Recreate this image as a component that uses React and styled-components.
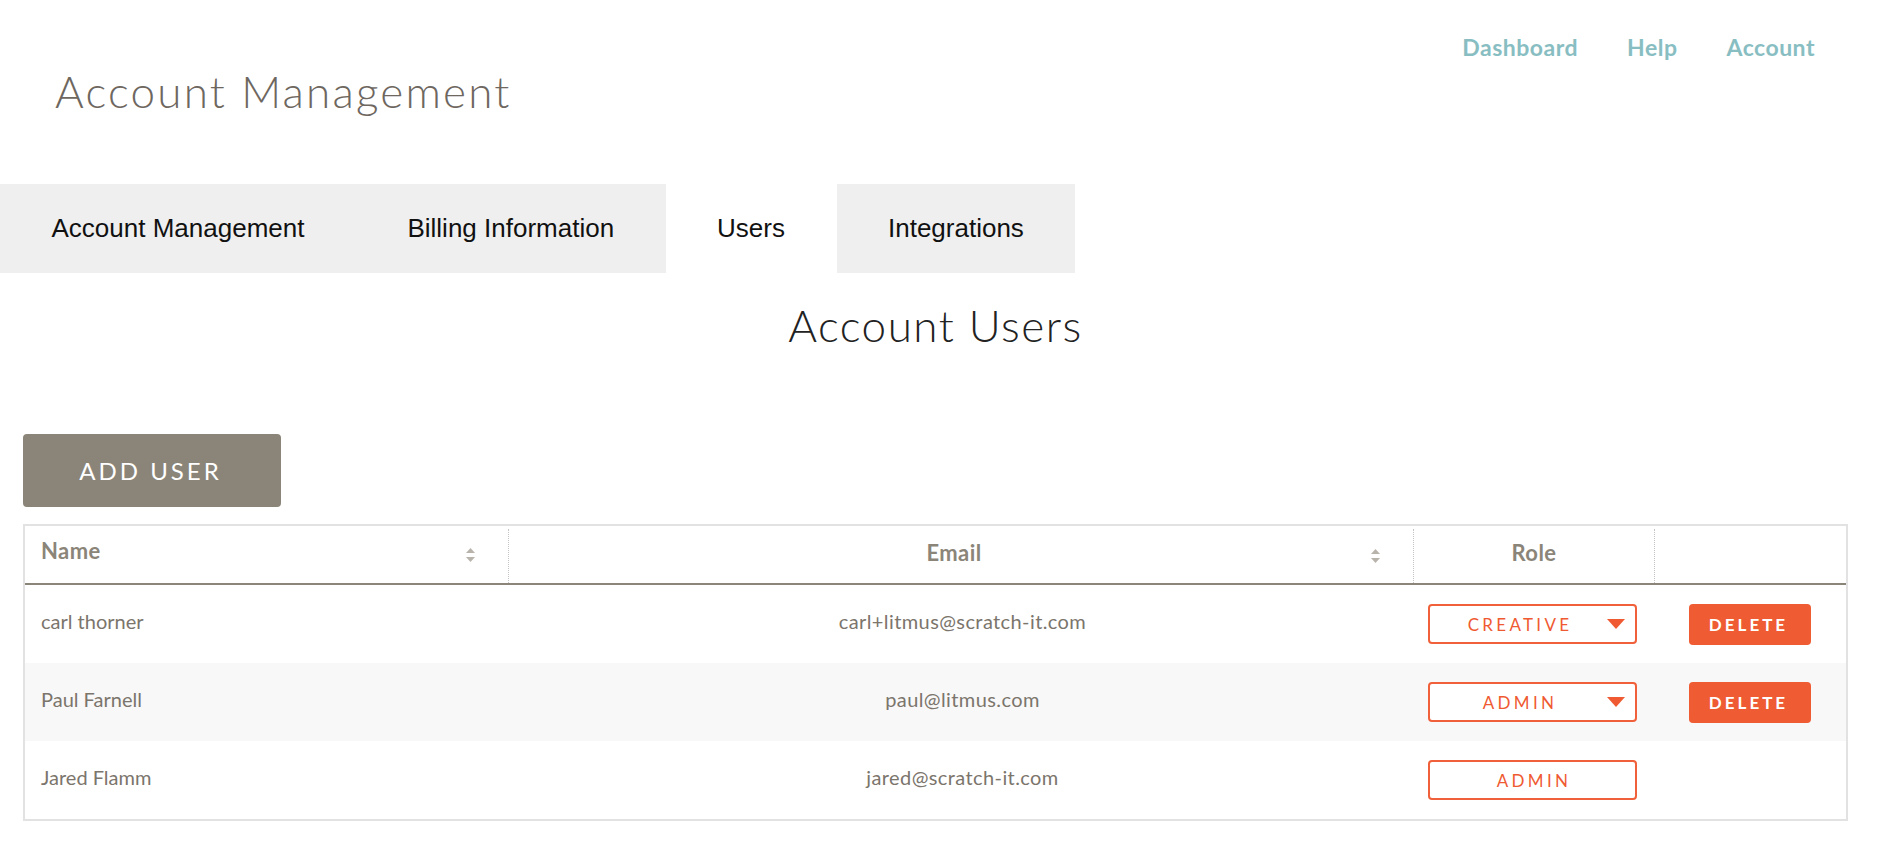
import React from "react";
import styled, { createGlobalStyle, css } from "styled-components";

const Global = createGlobalStyle`
  html, body { margin: 0; padding: 0; background: #fff; }
  body { font-family: Lato, "Liberation Sans", Arial, sans-serif; }
  * { box-sizing: border-box; }
`;

const Page = styled.div`
  width: 1880px;
  min-height: 848px;
  background: #fff;
`;

const TopBar = styled.header`
  display: flex;
  justify-content: space-between;
  align-items: flex-start;
  padding: 0 65px 0 55px;
`;

const PageTitle = styled.h1`
  margin: 0;
  padding-top: 66px;
  font-family: Lato, sans-serif;
  font-weight: 300;
  font-size: 44px;
  line-height: 50px;
  letter-spacing: 2.2px;
  color: #6e675f;
`;

const Nav = styled.nav`
  display: flex;
  gap: 49px;
  padding-top: 34px;
`;

const NavLink = styled.a`
  font-family: Lato, sans-serif;
  font-weight: 700;
  font-size: 23px;
  line-height: 26px;
  letter-spacing: 0.5px;
  color: #88bec2;
  text-decoration: none;
`;

const Tabs = styled.div`
  display: flex;
  margin-top: 68px;
`;

const Tab = styled.div`
  height: 89px;
  line-height: 89px;
  padding: 0 51.5px;
  font-family: "Liberation Sans", Arial, sans-serif;
  font-size: 26px;
  color: #111;
  background: ${(p) => (p.$active ? "#fff" : "#efefef")};
`;

const Content = styled.main`
  padding: 0 32px 0 23px;
`;

const SectionTitle = styled.h2`
  margin: 26px 0 0;
  text-align: center;
  font-family: Lato, sans-serif;
  font-weight: 300;
  font-size: 44px;
  line-height: 52px;
  letter-spacing: 1.5px;
  color: #222;
`;

const AddButton = styled.button`
  display: block;
  margin-top: 83px;
  width: 258px;
  height: 73px;
  border: none;
  border-radius: 4px;
  background: #8b8579;
  color: #fff;
  font-family: Lato, sans-serif;
  font-weight: 400;
  font-size: 24px;
  letter-spacing: 3px;
  padding-left: 3px;
`;

const Table = styled.div`
  margin-top: 17px;
  border: 2px solid #e2e2e2;
`;

const cols = "483px 905px 241px 1fr";

const HeadRow = styled.div`
  display: grid;
  grid-template-columns: ${cols};
  height: 59px;
  border-bottom: 2px solid #8b8579;
`;

const HeadCell = styled.div`
  display: flex;
  align-items: center;
  padding: ${(p) => (p.$sortable ? "0 33px 8px 16px" : "0 16px 8px")};
  ${(p) =>
    p.$divider &&
    css`
      border-left: 1px dotted #c4c4c4;
      margin-top: 3px;
    `}
`;

const HeadLabel = styled.span`
  flex: 1;
  text-align: ${(p) => p.$align || "left"};
  padding-left: ${(p) => (p.$align === "center" && p.$shift ? "12px" : "0")};
  font-family: Lato, sans-serif;
  font-weight: 700;
  font-size: 22px;
  letter-spacing: 0.4px;
  color: #8b8579;
`;

const SortWrap = styled.span`
  display: flex;
  margin-top: 8px;
`;

const Row = styled.div`
  display: grid;
  grid-template-columns: ${cols};
  height: 78px;
  align-items: center;
  background: ${(p) => (p.$striped ? "#f8f8f8" : "#fff")};
`;

const Cell = styled.div`
  display: flex;
  align-items: center;
  justify-content: ${(p) => p.$justify || "flex-start"};
  padding: ${(p) => p.$pad || "0 16px 6px"};
  font-family: Lato, sans-serif;
  font-size: 20px;
  letter-spacing: ${(p) => p.$spacing || "0"};
  color: #7b756c;
`;

const RoleSelect = styled.div`
  display: flex;
  align-items: center;
  width: 209px;
  height: 40px;
  border: 2px solid #f0603a;
  border-radius: 4px;
  background: #fff;
`;

const RoleLabel = styled.span`
  flex: 1;
  text-align: center;
  padding-left: 3px;
  font-family: Lato, sans-serif;
  font-weight: 400;
  font-size: 17px;
  letter-spacing: 3.3px;
  color: #ef5a32;
`;

const Arrow = styled.svg`
  width: 18px;
  height: 10px;
  margin-right: 10px;
  flex: none;
`;

const DeleteButton = styled.button`
  width: 122px;
  height: 41px;
  border: none;
  border-radius: 4px;
  background: #ef5b33;
  color: #fff;
  font-family: Lato, sans-serif;
  font-weight: 700;
  font-size: 17px;
  letter-spacing: 3px;
  padding-left: 3px;
`;

const SortIcon = () => (
  <SortWrap>
    <svg width="9" height="14" viewBox="0 0 9 14">
      <path d="M4.5 0 L9 5 L0 5 Z" fill="#b8b3ab" />
      <path d="M0 9 L9 9 L4.5 14 Z" fill="#b8b3ab" />
    </svg>
  </SortWrap>
);

const users = [
  { name: "carl thorner", email: "carl+litmus@scratch-it.com", role: "CREATIVE", editable: true },
  { name: "Paul Farnell", email: "paul@litmus.com", role: "ADMIN", editable: true },
  { name: "Jared Flamm", email: "jared@scratch-it.com", role: "ADMIN", editable: false },
];

export default function App() {
  return (
    <Page>
      <Global />
      <TopBar>
        <PageTitle>Account Management</PageTitle>
        <Nav>
          <NavLink href="#">Dashboard</NavLink>
          <NavLink href="#">Help</NavLink>
          <NavLink href="#">Account</NavLink>
        </Nav>
      </TopBar>
      <Tabs>
        <Tab>Account Management</Tab>
        <Tab>Billing Information</Tab>
        <Tab $active>Users</Tab>
        <Tab>Integrations</Tab>
      </Tabs>
      <Content>
        <SectionTitle>Account Users</SectionTitle>
        <AddButton>ADD USER</AddButton>
        <Table>
          <HeadRow>
            <HeadCell $sortable>
              <HeadLabel>Name</HeadLabel>
              <SortIcon />
            </HeadCell>
            <HeadCell $sortable $divider>
              <HeadLabel $align="center" $shift>Email</HeadLabel>
              <SortIcon />
            </HeadCell>
            <HeadCell $divider>
              <HeadLabel $align="center">Role</HeadLabel>
            </HeadCell>
            <HeadCell $divider />
          </HeadRow>
          {users.map((u, i) => (
            <Row key={u.email} $striped={i % 2 === 1}>
              <Cell>{u.name}</Cell>
              <Cell $justify="center" $pad="0 0 6px 4px" $spacing="0.4px">{u.email}</Cell>
              <Cell $pad="0 0 0 15px">
                <RoleSelect>
                  <RoleLabel>{u.role}</RoleLabel>
                  {u.editable && (
                    <Arrow viewBox="0 0 18 10">
                      <path d="M0 0 L18 0 L9 10 Z" fill="#ef5a32" />
                    </Arrow>
                  )}
                </RoleSelect>
              </Cell>
              <Cell $justify="center" $pad="0">
                {u.editable && <DeleteButton>DELETE</DeleteButton>}
              </Cell>
            </Row>
          ))}
        </Table>
      </Content>
    </Page>
  );
}
